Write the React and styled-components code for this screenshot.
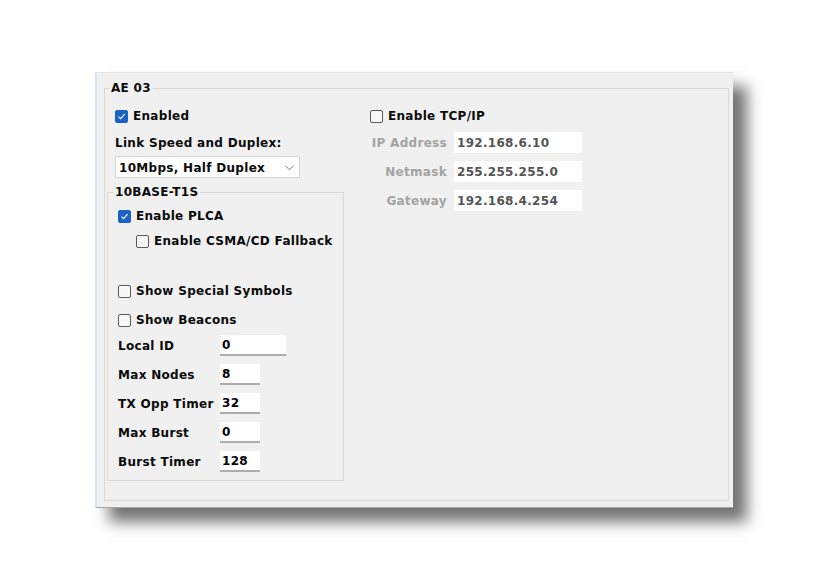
import React from "react";
import styled, { createGlobalStyle } from "styled-components";

const Global = createGlobalStyle`
  html, body { margin: 0; padding: 0; background: #ffffff; }
  body { font-family: "DejaVu Sans", Verdana, sans-serif; }
`;

const Page = styled.div`
  padding: 72px 0 0 95px;
  height: 587px;
  box-sizing: border-box;
`;

const Panel = styled.div`
  width: 638px;
  height: 436px;
  box-sizing: border-box;
  display: flex;
  background: #f0f0f0;
  border-left: 2px solid #d4e6f9;
  border-top: 1px solid #e4e4e4;
  border-bottom: 1px solid #a4a4a4;
  padding: 9px 4px 6px 7px;
  box-shadow: 14px 14px 14px rgba(0, 0, 0, 0.55);
  font-size: 12px;
  font-weight: bold;
  letter-spacing: 0.3px;
  color: #0a0a0a;
`;

const Group = styled.fieldset`
  margin: 0;
  padding: ${(p) => p.$pad || "0"};
  border: 1px solid #d8d8d8;
  min-width: 0;
  box-sizing: border-box;
  ${(p) => (p.$fill ? "flex: 1;" : "")}
  ${(p) => (p.$width ? `width: ${p.$width}px;` : "")}
  ${(p) => (p.$mt ? `margin-top: ${p.$mt}px;` : "")}
`;

const Legend = styled.legend`
  padding: 0 2px;
  margin-left: ${(p) => p.$ml}px;
  line-height: 13px;
  font-size: 12px;
  font-weight: bold;
  color: #0a0a0a;
`;

const Columns = styled.div`
  display: flex;
  gap: 26px;
  align-items: flex-start;
`;

const Column = styled.div`
  display: flex;
  flex-direction: column;
  ${(p) => (p.$width ? `width: ${p.$width}px;` : "")}
`;

const CheckRow = styled.label`
  display: flex;
  align-items: center;
  gap: 5px;
  height: 20px;
  margin-top: ${(p) => p.$mt || 0}px;
  padding-left: ${(p) => p.$indent || 0}px;
  white-space: nowrap;
`;

const Box = styled.span`
  width: 13px;
  height: 13px;
  box-sizing: border-box;
  border-radius: 2px;
  display: inline-flex;
  align-items: center;
  justify-content: center;
  flex: none;
  background: ${(p) => (p.$on ? "#1b63c4" : "#f7f7f7")};
  border: 1px solid ${(p) => (p.$on ? "#1b63c4" : "#5a5a5a")};
`;

const Check = ({ on }) => (
  <Box $on={on}>
    {on && (
      <svg width="9" height="9" viewBox="0 0 9 9">
        <path d="M1.5 4.6 L3.6 6.6 L7.6 2.2" fill="none" stroke="#fff" strokeWidth="1.1" />
      </svg>
    )}
  </Box>
);

const Text = styled.div`
  height: 20px;
  line-height: 20px;
  margin-top: ${(p) => p.$mt || 0}px;
  padding-left: ${(p) => p.$indent || 0}px;
  white-space: nowrap;
`;

const Select = styled.div`
  margin-top: 3px;
  margin-left: 8px;
  width: 185px;
  height: 22px;
  box-sizing: border-box;
  background: #fff;
  border: 1px solid #d6d6d6;
  display: flex;
  align-items: center;
  justify-content: space-between;
  padding: 1px 5px 0 3px;
`;

const InnerBody = styled.div`
  display: flex;
  flex-direction: column;
  padding-left: 10px;
`;

const FormRow = styled.div`
  display: flex;
  align-items: center;
  height: 21px;
  margin-top: ${(p) => p.$mt}px;
`;

const FormLabel = styled.span`
  width: 102px;
  white-space: nowrap;
`;

const Field = styled.div`
  width: ${(p) => p.$w}px;
  height: 21px;
  box-sizing: border-box;
  background: #fff;
  border-bottom: 2px solid #acacac;
  padding: 0 2px;
  display: flex;
  align-items: center;
  color: #000;
`;

const IpGrid = styled.div`
  display: grid;
  grid-template-columns: 77px 128px;
  column-gap: 7px;
  row-gap: 8px;
  margin-top: 6px;
  align-items: center;
`;

const IpLabel = styled.span`
  text-align: right;
  color: #a3a3a3;
  white-space: nowrap;
`;

const IpField = styled.div`
  height: 21px;
  box-sizing: border-box;
  background: #fff;
  padding: 0 3px;
  display: flex;
  align-items: center;
  color: #555;
`;

const plcaFields = [
  { label: "Local ID", value: "0", w: 66 },
  { label: "Max Nodes", value: "8", w: 40 },
  { label: "TX Opp Timer", value: "32", w: 40 },
  { label: "Max Burst", value: "0", w: 40 },
  { label: "Burst Timer", value: "128", w: 40 },
];

const ipFields = [
  { label: "IP Address", value: "192.168.6.10" },
  { label: "Netmask", value: "255.255.255.0" },
  { label: "Gateway", value: "192.168.4.254" },
];

export default function App() {
  return (
    <>
      <Global />
      <Page>
        <Panel>
          <Group $fill $pad="0 0 0 2px">
            <Legend $ml={2}>AE 03</Legend>
            <Columns>
              <Column $width={237}>
                <CheckRow $mt={11} $indent={8}>
                  <Check on />
                  Enabled
                </CheckRow>
                <Text $mt={7} $indent={8}>Link Speed and Duplex:</Text>
                <Select>
                  <span>10Mbps, Half Duplex</span>
                  <svg width="9" height="6" viewBox="0 0 9 6">
                    <path d="M0.5 0.8 L4.5 4.8 L8.5 0.8" fill="none" stroke="#7a7a7a" strokeWidth="1" />
                  </svg>
                </Select>
                <Group $width={237} $mt={8} $pad="0 0 8px 0">
                  <Legend $ml={5}>10BASE-T1S</Legend>
                  <InnerBody>
                    <CheckRow $mt={7}>
                      <Check on />
                      Enable PLCA
                    </CheckRow>
                    <CheckRow $mt={5} $indent={18}>
                      <Check />
                      Enable CSMA/CD Fallback
                    </CheckRow>
                    <CheckRow $mt={30}>
                      <Check />
                      Show Special Symbols
                    </CheckRow>
                    <CheckRow $mt={9}>
                      <Check />
                      Show Beacons
                    </CheckRow>
                    {plcaFields.map((f, i) => (
                      <FormRow key={f.label} $mt={i === 0 ? 5 : 8}>
                        <FormLabel>{f.label}</FormLabel>
                        <Field $w={f.w}>{f.value}</Field>
                      </FormRow>
                    ))}
                  </InnerBody>
                </Group>
              </Column>
              <Column>
                <CheckRow $mt={11}>
                  <Check />
                  Enable TCP/IP
                </CheckRow>
                <IpGrid>
                  {ipFields.map((f) => (
                    <React.Fragment key={f.label}>
                      <IpLabel>{f.label}</IpLabel>
                      <IpField>{f.value}</IpField>
                    </React.Fragment>
                  ))}
                </IpGrid>
              </Column>
            </Columns>
          </Group>
        </Panel>
      </Page>
    </>
  );
}
